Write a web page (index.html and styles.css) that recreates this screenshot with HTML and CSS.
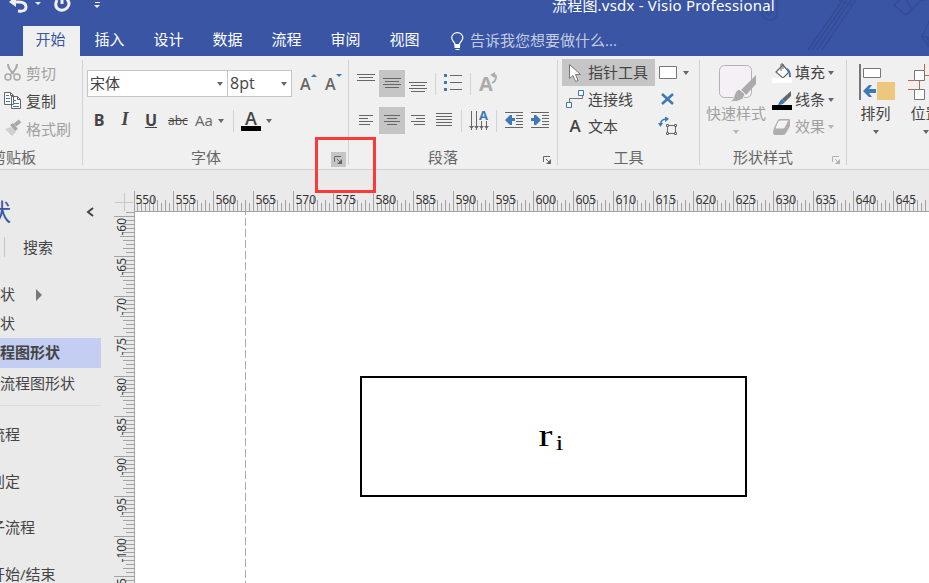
FILE: index.html
```html
<!DOCTYPE html>
<html lang="zh-CN">
<head>
  <meta charset="UTF-8">
  <title>流程图.vsdx - Visio Professional</title>
  <link rel="stylesheet" href="styles.css">
</head>
<body>
  <header class="header">
    <svg class="header-art" width="180" height="56" viewBox="0 0 180 56">
      <path d="M13 8v4q1 8 8 8t7-8V0M17 8v3q1 4 4 3t2-6V0M59 50 94 0M63 50 98 0M68 50 102 0M73 50 107 0M90 0l12 5M145 5l10-9 8 14-6 5zM157 15l14-14 6-1M173 37l8 11-2-11zM173 37 190 0M178 38l4 10"/>
    </svg>
    <div class="title-bar">
      <svg class="quick-access" width="110" height="16" viewBox="0 0 110 16">
        <path class="qa-stroke" d="M13 2h6q7 0 7 5t-8 4"/>
        <path class="qa-fill" d="M9 2l7-6v11zM35 2h6l-3 3zM94 5h6l-3 3zM95 2h5v1h-5z"/>
        <path class="qa-stroke" d="M57 0q-3 6 1 9 5 3 9-1t0-9M62 4V-1"/>
      </svg>
      <span class="title">流程图.vsdx - Visio Professional</span>
    </div>
    <nav class="tabs">
      <span class="tab active">开始</span>
      <span class="tab">插入</span>
      <span class="tab">设计</span>
      <span class="tab">数据</span>
      <span class="tab">流程</span>
      <span class="tab">审阅</span>
      <span class="tab">视图</span>
      <span class="tell-me">
        <svg width="13" height="19" viewBox="0 0 13 19">
          <path d="M4 13q0-2-2-4Q.7 7 .7 5.800a5.600 5.200 0 0 1 11.200 0Q11.900 7 10.500 9q-2 2-2 4z" fill="none" stroke="#fff" stroke-width="1.200"/>
          <path d="M3.500 12h5.500v4H3.500zM4.500 17h4v1h-4z" fill="#fff"/>
        </svg>
        告诉我您想要做什么...
      </span>
    </nav>
  </header>

  <section class="ribbon">
    <div class="group clipboard">
      <div class="rows">
        <div class="cmd off">
          <svg width="18" height="20" viewBox="0 0 18 20"><path d="M4 1q0 5 6 10M13 1q0 5-6 10" stroke="#a8a8a8" stroke-width="2" fill="none"/><circle cx="4" cy="14" r="3" class="ln-off"/><circle cx="13" cy="14" r="3" class="ln-off"/></svg>
          <span>剪切</span>
        </div>
        <div class="cmd">
          <svg width="18" height="20" viewBox="0 0 18 20"><path d="M.5 1.500h6l3 3v9h-9zM7.500 5.500h6l3 3v9h-9z" fill="#fff" stroke="#666"/><path d="M6.500 1.500v3h3M13.500 5.500v3h3" stroke="#666" fill="none"/><path d="M2 4.500h3M2 7.500h4M2 10.500h4M9 9.500h3M9 12.500h6M9 15.500h6" stroke="#3d79b5"/></svg>
          <span>复制</span>
        </div>
        <div class="cmd off">
          <svg width="18" height="20" viewBox="0 0 18 20"><path d="M1 10l6-2 5 5-4 4z" fill="#d3cdd3"/><path d="M6 6l3-2 5 6-3 2z" fill="#a8a8a8"/><path d="M11 6l5-4" stroke="#a8a8a8" stroke-width="4"/></svg>
          <span>格式刷</span>
        </div>
      </div>
      <div class="foot"><span class="name">剪贴板</span></div>
    </div>

    <div class="group font">
      <div class="bar">
        <div class="combo face"><span>宋体</span><i class="caret"></i></div>
        <div class="combo size"><span>8pt</span><i class="caret"></i></div>
        <span class="grow">A<svg width="6" height="3"><path d="M0 3l3-3 3 3z" fill="#3d79b5"/></svg></span>
        <span class="grow">A<svg width="6" height="3"><path d="M0 0h6L3 3z" fill="#3d79b5"/></svg></span>
      </div>
      <div class="bar">
        <b class="letter">B</b>
        <b class="letter italic">I</b>
        <b class="letter under">U</b>
        <span class="strike">abc</span>
        <span class="case">Aa</span><i class="caret"></i>
        <i class="sep"></i>
        <span class="color">A</span><i class="caret"></i>
      </div>
      <div class="foot">
        <span class="name">字体</span>
        <span class="launcher hover"><svg width="9" height="9" viewBox="0 0 9 9"><path d="M.5 6V.5H7M3 3l4 4" /><path d="M8 3v5H3z" class="solid"/></svg></span>
      </div>
    </div>

    <div class="group para">
      <div class="bar">
        <span class="tool"><svg width="20" height="20"><path d="M1 1.500h18M3 4.500h14M1 7.500h18"/></svg></span>
        <span class="tool on"><svg width="20" height="20"><path d="M1 5.500h18M3 8.500h14M1 11.500h18M3 14.500h14"/></svg></span>
        <span class="tool"><svg width="20" height="20"><path d="M1 9.500h18M3 12.500h14M1 15.500h18M3 18.500h14"/></svg></span>
        <i class="sep"></i>
        <span class="tool"><svg width="20" height="20"><path d="M7 2.500h12M7 9.500h12M7 16.500h12"/><path d="M1 1h3v3H1zM1 8h3v3H1zM1 15h3v3H1z" class="blue"/></svg></span>
        <i class="sep"></i>
        <span class="rotate">A<svg width="8" height="12" viewBox="0 0 8 12"><path d="M2 3q5-1 4 3-1 4-4 5" fill="none" stroke="#ababab" stroke-width="1.700"/><path d="M0 3l5-3v6z" fill="#ababab"/></svg></span>
      </div>
      <div class="bar">
        <span class="tool"><svg width="20" height="20"><path d="M3 5.500h14M3 8.500h9M3 11.500h14M3 14.500h11"/></svg></span>
        <span class="tool on"><svg width="20" height="20"><path d="M2 5.500h16M5 8.500h10M2 11.500h16M5 14.500h10"/></svg></span>
        <span class="tool"><svg width="20" height="20"><path d="M3 5.500h14M8 8.500h9M3 11.500h14M6 14.500h11"/></svg></span>
        <span class="tool"><svg width="20" height="20"><path d="M2 3.500h16M2 6.500h16M2 9.500h16M2 12.500h16M2 15.500h16"/></svg></span>
        <i class="sep"></i>
        <span class="tool"><svg width="20" height="21"><path d="M2.500 1v19M7.500 1v19M12.500 11v9M17.500 11v9"/><path d="M0 16h5l-2.500 3zM5 16h5l-2.500 3zM10 16h5l-2.500 3zM15 16h5l-2.500 3z" class="dark"/><text x="10" y="10">A</text></svg></span>
        <i class="sep"></i>
        <span class="tool"><svg width="20" height="20"><path d="M1 2.500h18M12 5.500h7M12 8.500h7M12 11.500h7M12 14.500h7M1 17.500h18"/><path d="M1 10l5-5h2v3h3v3H8v4H6z" class="blue"/></svg></span>
        <span class="tool"><svg width="20" height="20"><path d="M1 2.500h18M12 5.500h7M12 8.500h7M12 11.500h7M12 14.500h7M1 17.500h18"/><path d="M11 10L6 5H4v3H1v3h3v4h2z" class="blue"/></svg></span>
      </div>
      <div class="foot">
        <span class="name">段落</span>
        <span class="launcher"><svg width="9" height="9" viewBox="0 0 9 9"><path d="M.5 6V.5H7M3 3l4 4" /><path d="M8 3v5H3z" class="solid"/></svg></span>
      </div>
    </div>

    <div class="group tools">
      <div class="cols">
        <div class="rows">
          <div class="cmd on">
            <svg width="20" height="20" viewBox="0 0 20 20"><path d="M3.500 1.500v14l3.500-3 2.500 6 2.500-1-2.500-6h5z" fill="#fff" stroke="#777"/></svg>
            <span>指针工具</span>
          </div>
          <div class="cmd">
            <svg width="20" height="20" viewBox="0 0 20 20"><path d="M3.500 12V8.500h13V6" fill="none" stroke="#777"/><path d="M12.500 .5h5v5h-5zM.5 12.500h5v5h-5z" fill="#fff" stroke="#3d79b5"/></svg>
            <span>连接线</span>
          </div>
          <div class="cmd">
            <b class="text-icon">A</b>
            <span>文本</span>
          </div>
        </div>
        <div class="side">
          <div class="slot"><svg width="20" height="20"><path d="M1.500 3.500h17v12h-17z" fill="#fff" stroke="#777"/></svg><i class="caret"></i></div>
          <div class="slot"><svg width="20" height="20"><path d="M4 4l11 10M15 4L4 14" stroke="#3d79b5" stroke-width="2.500"/></svg></div>
          <div class="slot"><svg width="20" height="20"><path d="M2.500 8q0-6 6-6" fill="none" stroke="#3d79b5" stroke-width="1.500"/><path d="M7-1l4 3-4 3zM0 6h5l-2.500 4z" fill="#3d79b5"/><path d="M9.500 8.500h8v8h-8z" fill="none" stroke="#666"/><path d="M8.500 7.500h2v2h-2zM16.500 7.500h2v2h-2zM8.500 15.500h2v2h-2zM16.500 15.500h2v2h-2z" fill="#fff" stroke="#666"/></svg></div>
        </div>
      </div>
      <div class="foot"><span class="name">工具</span></div>
    </div>

    <div class="group styles">
      <div class="cols">
        <div class="big off">
          <svg width="40" height="40" viewBox="0 0 40 40"><rect x="1.500" y="1.500" width="32" height="32" rx="5" fill="#f5f0f6" stroke="#b5afb6"/><path d="M38 11v9l-10 11-5-5z" fill="#ababab"/><path d="M21 25l6 5-2 5q-6 4-14 2 5-1 5-5 1-5 5-7z" fill="#ababab" stroke="#f0f0f0"/></svg>
          <span>快速样式</span>
          <i class="caret"></i>
        </div>
        <div class="rows">
          <div class="cmd">
            <svg width="20" height="20" viewBox="0 0 20 20"><path d="M4 9l7-7 6 7-6 6z" fill="#fff" stroke="#666" stroke-width="1.200"/><path d="M9 8V1h2v5" fill="none" stroke="#666"/><path d="M15 5q4 2 4 9h-2q0-5-2-6z" fill="#3d79b5"/><path d="M0 15h20v5H0z" fill="#fff"/></svg>
            <span>填充</span><i class="caret"></i>
          </div>
          <div class="cmd">
            <svg width="20" height="20" viewBox="0 0 20 20"><path d="M19 1v5l-6 6-3-3z" fill="#666"/><path d="M10 9l3 3q-2 3-7 3 2-5 4-6z" fill="#3d79b5"/><path d="M0 15h20v5H0z" fill="#000"/></svg>
            <span>线条</span><i class="caret"></i>
          </div>
          <div class="cmd off">
            <svg width="20" height="20" viewBox="0 0 20 20"><path d="M2 11l4-8q1-1 3-1h8q1 0 1 2v5l-4 7q-1 2-3 2H3q-2 0-2-3z" fill="#b0acb0"/><path d="M3 11l3-7q1-1 3-1h8l-4 8q-1 1-2 1H3z" fill="#f5f0f6" stroke="#b0acb0"/></svg>
            <span>效果</span><i class="caret"></i>
          </div>
        </div>
      </div>
      <div class="foot">
        <span class="name">形状样式</span>
        <span class="launcher pale"><svg width="9" height="9" viewBox="0 0 9 9"><path d="M.5 6V.5H7M3 3l4 4" /><path d="M8 3v5H3z" class="solid"/></svg></span>
      </div>
    </div>

    <div class="group arrange">
      <div class="cols">
        <div class="big">
          <svg width="40" height="40" viewBox="0 0 40 40"><path d="M3 0h2v36H3z" fill="#777"/><path d="M7.500 4.500h17v9h-17z" fill="#fff" stroke="#777"/><path d="M21 18h18v18H21z" fill="#edc77d"/><path d="M7 27l6-6h3l-3 4h7v4h-7l3 4h-3z" fill="#3d79b5"/></svg>
          <span>排列</span>
          <i class="caret"></i>
        </div>
        <div class="big">
          <svg width="40" height="40" viewBox="0 0 40 40"><path d="M18.500 0v6M13.500 17v9M2 16.500h6M2 25.500h6M19 11.500h19" stroke="#d9603b" fill="none"/><path d="M8.500 6.500h10v10h-10zM8.500 25.500h10v10h-10z" fill="#fff" stroke="#777"/></svg>
          <span>位置</span>
          <i class="caret"></i>
        </div>
      </div>
    </div>
  </section>

  <main class="workspace">
    <aside class="shapes">
      <div class="shapes-head"><h2>形状</h2><svg width="8" height="10"><path d="M7 1L2 5l5 4" fill="none" stroke="#444" stroke-width="2"/></svg></div>
      <div class="search"><span>搜索</span></div>
      <ul class="stencils">
        <li>更多形状<i class="arrow"></i></li>
        <li>快速形状</li>
        <li class="selected">基本流程图形状</li>
        <li>跨职能流程图形状</li>
      </ul>
      <ul class="masters">
        <li>流程</li>
        <li>判定</li>
        <li>子流程</li>
        <li>开始/结束</li>
      </ul>
    </aside>
    <div class="drawing">
      <svg class="corner" width="21" height="21"><path d="M10.500 2v18M1 11.500h18"/></svg>
      <svg class="ruler" id="ruler-x" width="794" height="21"></svg>
      <svg class="ruler" id="ruler-y" width="21" height="371"></svg>
      <div class="page">
        <div class="page-break"></div>
        <div class="process"><span class="sym">r</span><span class="sym sub">i</span></div>
      </div>
    </div>
  </main>

  <div class="marker"></div>

  <script>
    const NS = "http://www.w3.org/2000/svg";
    const rulerX = document.getElementById("ruler-x");
    const rulerY = document.getElementById("ruler-y");

    function add(parent, tag, attrs, text) {
      const el = document.createElementNS(NS, tag);
      for (const key in attrs) el.setAttribute(key, attrs[key]);
      if (text) el.textContent = text;
      parent.appendChild(el);
    }

    // ten ticks per label, 4px apart
    function tickLength(n) {
      if (n === 0) return 20;
      if (n === 5) return 14;
      return n % 2 ? 8 : 11;
    }

    let pathX = "M-1 20.5H794M-0.5 0V21";
    let pathY = "M20.5 0V371";
    for (let i = 1; i < 199; i++) {
      pathX += `M${i * 4 - 1.5} 20v-${tickLength(i % 10)}`;
    }
    for (let i = -1; i < 92; i++) {
      pathY += `M20 ${i * 4 + 4.5}h-${tickLength((i + 10) % 10)}`;
    }
    add(rulerX, "path", { d: pathX });
    add(rulerY, "path", { d: pathY });

    for (let i = 0; i < 20; i++) {
      add(rulerX, "text", { x: i * 40 + 0.5, y: 13 }, String(550 + i * 5));
    }
    for (let i = 0; i < 10; i++) {
      add(rulerY, "text", { transform: `translate(12 ${i * 40 + 6}) rotate(-90)`, "text-anchor": "end" }, String(-60 - i * 5));
    }
  </script>
</body>
</html>
```
FILE: styles.css
```css
* {
  box-sizing: border-box;
}
body {
  margin: 0;
  width: 929px;
  height: 583px;
  overflow: hidden;
  display: flex;
  flex-direction: column;
  position: relative;
  font-family: "Open Sans", "Noto Sans CJK SC", sans-serif;
  font-size: 15px;
  color: #444;
  background: #eaeaea;
}
svg {
  display: block;
  flex: none;
}
ul {
  list-style: none;
  margin: 0;
  padding: 0;
}

/* header */
.header {
  height: 56px;
  flex: none;
  background: #3955a3;
  color: #fff;
  position: relative;
  overflow: hidden;
}
.header-art {
  position: absolute;
  left: 749px;
  top: 0;
  fill: none;
  stroke: #334d97;
  stroke-width: 1.5;
}
.title-bar {
  height: 26px;
  display: flex;
}
.quick-access {
  margin-right: 442px;
}
.qa-stroke {
  fill: none;
  stroke: #f0f0f0;
  stroke-width: 3;
}
.qa-fill {
  fill: #f0f0f0;
}
.title {
  line-height: 20px;
  margin-top: -5px;
  white-space: nowrap;
  position: relative;
  font-family: "Noto Sans", "Noto Sans CJK SC", sans-serif;
  font-size: 15px;
  letter-spacing: 0.2px;
}
.tabs {
  display: flex;
  height: 30px;
  padding-left: 23px;
  line-height: 27px;
}
.tab {
  width: 59px;
  text-align: center;
}
.tab.active {
  width: 57px;
  padding-right: 2px;
  background: #f0f0f0;
  color: #3955a3;
}
.tell-me {
  display: flex;
  gap: 6px;
  margin-left: 17px;
  color: #c3cce3;
  line-height: 29px;
}
.tell-me svg {
  margin-top: 6px;
}

/* ribbon */
.ribbon {
  height: 114px;
  flex: none;
  display: flex;
  background: #f0f0f0;
  border-bottom: 1px solid #d2d2d2;
  padding: 4px 0 5px;
  overflow: hidden;
}
.group {
  flex: none;
  display: flex;
  flex-direction: column;
  border-right: 1px solid #d2d2d2;
  height: 105px;
}
.foot {
  display: flex;
  align-items: center;
  margin-top: auto;
  height: 16px;
  color: #666;
  line-height: 16px;
}
.name {
  flex: 1;
  text-align: center;
}
.launcher {
  width: 15px;
  height: 15px;
  margin: 4px 2px 0 0;
  padding: 4px 3px;
}
.launcher.hover {
  background: #c5c5c5;
}
.launcher path {
  fill: none;
  stroke: #666;
}
.launcher .solid {
  fill: #666;
  stroke: none;
}
.launcher.pale {
  opacity: 0.45;
}
.caret {
  flex: none;
  width: 0;
  height: 0;
  border: 3.5px solid transparent;
  border-top: 4px solid #666;
  border-bottom: 0;
}
.off {
  color: #a0a0a0;
}
.off .caret {
  border-top-color: #b5b5b5;
}
.ln-off {
  fill: none;
  stroke: #a8a8a8;
  stroke-width: 1.5;
}
.rows {
  margin-top: -1px;
}
.cols {
  display: flex;
}
.cmd {
  display: flex;
  align-items: center;
  height: 27px;
  line-height: 24px;
  white-space: nowrap;
}
.cmd span {
  padding-bottom: 2px;
}

.clipboard {
  width: 83px;
}
.clipboard .cmd {
  gap: 4px;
  padding-left: 4px;
  height: 28px;
}
.clipboard .cmd span {
  padding-bottom: 1px;
}
.clipboard .foot {
  margin-left: -9px;
}
.clipboard .name {
  text-align: left;
}

.bar {
  display: flex;
  align-items: center;
  height: 27px;
  margin-top: 10px;
}
.sep {
  width: 1px;
  height: 22px;
  background: #d2d2d2;
}

.font {
  width: 266px;
}
.font .bar {
  padding-left: 4px;
}
.font .name {
  padding-right: 2px;
}
.combo {
  display: flex;
  align-items: center;
  justify-content: space-between;
  height: 27px;
  border: 1px solid #c6c6c6;
  background: #fff;
  padding: 0 4px 0 2px;
  line-height: 24px;
}
.combo span {
  padding-bottom: 1px;
}
.combo.face {
  width: 141px;
}
.combo.size {
  width: 65px;
  margin-left: -1px;
  font-size: 16px;
}
.grow {
  display: flex;
  width: 25px;
  font: 600 16px/20px "Open Sans", sans-serif;
  color: #666;
  padding-left: 8px;
}
.letter {
  width: 26px;
  margin-top: -2px;
  text-align: center;
  font: 700 16px "Open Sans", sans-serif;
}
.letter:first-child {
  margin-left: -1px;
}
.italic {
  font-family: "Liberation Serif", serif;
  font-style: italic;
  font-size: 18px;
}
.under {
  text-decoration: underline;
}
.strike {
  width: 24px;
  margin-left: 4px;
  font-size: 12px;
  text-decoration: line-through;
}
.case {
  margin: -2px 2px 0 3px;
  width: 21px;
  font-size: 15px;
  color: #666;
}
.font .sep {
  margin: 0 7px 0 9px;
}
.color {
  width: 20px;
  height: 20px;
  border-bottom: 5px solid #000;
  font: 600 18px/14px "Open Sans", sans-serif;
  text-align: center;
  margin-right: 5px;
}

.para {
  width: 209px;
}
.para .bar {
  padding-left: 4px;
}
.para .name {
  padding-right: 3px;
}
.tool {
  width: 26px;
  height: 27px;
  padding: 3px;
}
.tool.on {
  background: #c5c5c5;
}
.tool path {
  stroke: #666;
  fill: none;
}
.tool .blue {
  fill: #3d79b5;
  stroke: none;
}
.tool .dark {
  fill: #666;
  stroke: none;
}
.tool text {
  font: 700 13px "Open Sans", sans-serif;
  fill: #3d79b5;
}
.para .sep {
  margin: 0 4px;
}
.rotate {
  display: flex;
  font: 700 20px/24px "Open Sans", sans-serif;
  color: #ababab;
  padding-left: 4px;
}
.rotate svg {
  margin: 0 0 0 -3px;
}

.tools {
  width: 142px;
}
.tools .cols {
  padding-left: 4px;
}
.tools .cmd {
  width: 93px;
  padding-left: 4px;
  gap: 2px;
}
.tools .on {
  background: #c5c5c5;
}
.text-icon {
  width: 20px;
  padding: 0 2px 2px 0;
  text-align: center;
  font: 600 17px "Open Sans", sans-serif;
}
.side {
  padding-left: 3px;
  margin-top: -1px;
}
.slot {
  display: flex;
  align-items: center;
  height: 27px;
  gap: 5px;
}

.styles {
  width: 147px;
}
.styles .name {
  padding-right: 3px;
}
.big {
  display: flex;
  flex-direction: column;
  align-items: center;
  width: 72px;
  padding-top: 4px;
  line-height: 20px;
}
.big span {
  margin-top: -1px;
}
.big .caret {
  margin-top: 7px;
}
.styles .big svg {
  margin-left: 4px;
}
.styles .cmd {
  gap: 3px;
}

.arrange {
  width: 160px;
  border: 0;
}
.arrange .big {
  width: 50px;
  padding-left: 7px;
}

/* workspace */
.workspace {
  flex: 1;
  display: flex;
  overflow: hidden;
}
.shapes {
  width: 115px;
  flex: none;
  overflow: hidden;
}
.shapes-head {
  display: flex;
  align-items: center;
  height: 54px;
  padding-top: 30px;
}
.shapes-head h2 {
  flex: none;
  width: 123px;
  margin: 0 0 0 -37px;
  font-size: 24px;
  font-weight: 400;
  line-height: 26px;
  color: #3955a3;
}
.search {
  height: 20px;
  margin: 13px 0 0 4px;
  padding-left: 18px;
  border-left: 1px solid #c6c6c6;
  line-height: 20px;
}
.stencils {
  width: 101px;
  margin-top: 23px;
  padding-bottom: 7px;
  border-bottom: 1px solid #dcdcdc;
}
.stencils li {
  display: flex;
  align-items: center;
  height: 29px;
  padding-bottom: 2px;
  text-indent: -45px;
  white-space: nowrap;
}
.stencils .selected {
  height: 30px;
  padding-bottom: 3px;
  background: #c3cef2;
  font-weight: 700;
}
.stencils li:last-child {
  height: 30px;
}
.arrow {
  margin: 2px 0 0 21px;
  border: 6px solid transparent;
  border-left-color: #777;
  border-right: 0;
}
.masters {
  padding-top: 5px;
}
.masters li {
  height: 46.500px;
  line-height: 46.500px;
  text-indent: -10px;
  white-space: nowrap;
}

.drawing {
  display: grid;
  grid-template-columns: 21px 794px;
  grid-template-rows: 21px 371px;
  padding-top: 21px;
  margin-left: -1px;
}
.corner path {
  stroke: #c8c8c8;
}
.ruler {
  overflow: visible;
}
.ruler path {
  fill: none;
  stroke: #a3a3a3;
}
.ruler text {
  font: 12px "Noto Sans", sans-serif;
  fill: #333;
}
.page {
  position: relative;
  background: #fff;
  overflow: hidden;
}
.page-break {
  position: absolute;
  left: 110px;
  top: -5px;
  width: 1px;
  height: 380px;
  background: repeating-linear-gradient(#aaa 0 8px, transparent 8px 11px);
}
.process {
  position: absolute;
  left: 225px;
  top: 164px;
  width: 387px;
  height: 121px;
  border: 2px solid #000;
  display: flex;
  align-items: center;
  justify-content: center;
  color: #000;
}
.sym {
  width: 15px;
  margin: -2px 1px 0 -4px;
  text-align: center;
  font: 31px/34px "Liberation Serif", serif;
  transform: scaleX(1.35);
}
.sym.sub {
  width: 11px;
  margin: 12px 0 0;
  font-size: 20px;
}

/* red highlight over the font dialog launcher */
.marker {
  position: absolute;
  left: 315px;
  top: 137px;
  width: 61px;
  height: 56px;
  border: 3px solid #fb3a3a;
}
```
